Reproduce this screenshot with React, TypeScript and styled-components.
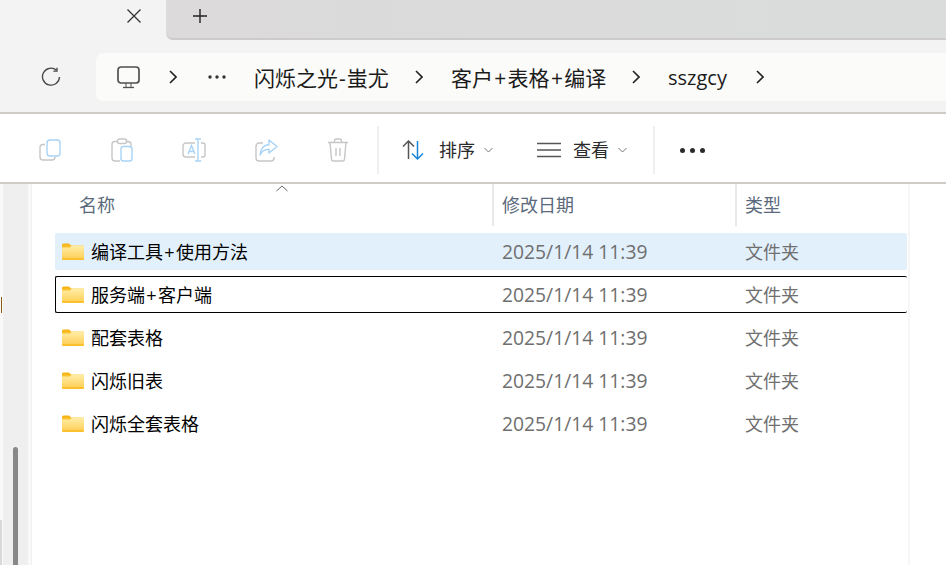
import React from "react";
import styled, { createGlobalStyle } from "styled-components";

const Global = createGlobalStyle`
  html, body { margin: 0; padding: 0; background: #fff; }
  #root { width: 946px; height: 565px; overflow: hidden; }
  * { box-sizing: border-box; }
`;
const CJK = `"Open Sans", "Noto Sans CJK SC", sans-serif`;

const Window = styled.div`
  width: 946px; height: 565px; display: flex; flex-direction: column;
  font-family: ${CJK}; overflow: hidden; background: #fff;
`;
const TabStrip = styled.div`display: flex; height: 40px; background: #f3f3f3; flex: none;`;
const ActiveTab = styled.div`
  width: 166px; padding-left: 125px; padding-top: 7px; flex: none;
`;
const IdleStrip = styled.div`
  flex: 1; background: linear-gradient(90deg, #dcdada, #dadcdc);
  border-bottom: 2px solid #cdcccb; border-bottom-left-radius: 7px;
  padding: 7px 0 0 25px;
`;
const NavBar = styled.div`
  height: 74px; flex: none; background: #f3f3f3; border-bottom: 2px solid #cfcbc6;
  display: flex; padding-top: 13px; align-items: flex-start;
`;
const NavSide = styled.div`
  width: 96px; height: 48px; flex: none; padding-left: 41px; display: flex; align-items: center;
`;
const AddressBar = styled.div`
  flex: 1; height: 48px; background: #fbfbfa; border-radius: 7px 0 0 7px;
  display: flex; align-items: center; padding-left: 21px; color: #1b1b1b;
`;
const Crumb = styled.span<{ $w: number }>`
  font-size: 21px; line-height: 46px; padding-top: 2px; width: ${(p) => p.$w}px; white-space: nowrap; flex: none;
`;
const LatinCrumb = styled(Crumb)`font-size: 20px;`;
const Hyphen = styled.span`margin: 0 1px;`;
const Slot = styled.span<{ $w: number }>`
  width: ${(p) => p.$w}px; flex: none; display: flex; align-items: center;
`;
const CommandBar = styled.div`
  height: 70px; flex: none; background: #fff; border-bottom: 2px solid #cfcbc6;
  display: flex; align-items: center; padding: 4px 0 0 14px;
`;
const ToolButton = styled.div`
  width: 72px; height: 48px; flex: none; display: flex; align-items: center; justify-content: center;
`;
const Divider = styled.div<{ $ml: number }>`
  width: 2px; height: 48px; background: #efefef; flex: none; margin-left: ${(p) => p.$ml}px;
`;
const MenuButton = styled.div<{ $ml: number; $w: number }>`
  display: flex; align-items: center; margin-left: ${(p) => p.$ml}px; width: ${(p) => p.$w}px; flex: none;
`;
const MenuLabel = styled.span<{ $ml: number }>`
  font-size: 18px; color: #2b2b2b; line-height: 24px; margin-left: ${(p) => p.$ml}px; width: 36px; white-space: nowrap;
`;
const Caret = styled.span`margin-left: 9px; display: flex;`;
const MoreDots = styled.div`margin-left: 25px; display: flex; gap: 5px;`;
const Dot = styled.i`width: 5px; height: 5px; border-radius: 50%; background: #2b2b2b; display: block;`;

const Body = styled.div`flex: 1; display: flex; min-height: 0;`;
const LeftGutter = styled.div`
  width: 31px; flex: none; background: #f9f9f9; display: flex; align-items: stretch;
  padding: 0 3px 0 3px;
`;
const ScrollTrack = styled.div`
  flex: 1; background: #efefef; position: relative;
`;
const ScrollThumb = styled.div`
  position: absolute; left: 10px; top: 263px; width: 5px; height: 130px;
  background: #888; border-radius: 3px 3px 0 0;
`;
const EdgeMark = styled.div`
  position: absolute; left: -2px; top: 113px; width: 1px; height: 16px; background: #8a5a10;
`;
const EdgeBlock = styled.div`
  position: absolute; left: -3px; top: 336px; width: 2px; height: 50px; background: #d9d9d9;
`;
const Main = styled.div`
  width: 877px; flex: none; border-left: 1px solid #f1f1f1;
`;
const RightEdge = styled.div`
  width: 2px; flex: none; background: #f6f6f6;
`;
const HeaderRow = styled.div`
  height: 40px; display: grid; grid-template-columns: 460px 243px 1fr; position: relative;
`;
const HeaderCell = styled.div<{ $first?: boolean; $pad: number }>`
  font-size: 18px; color: #5a6a7c; line-height: 42px;
  padding-left: ${(p) => p.$pad}px;
  border-left: ${(p) => (p.$first ? "none" : "2px solid #e9e9e9")};
`;
const SortCaret = styled.svg`position: absolute; left: 243px; top: 0;`;
const List = styled.div`
  margin: 9px 0 0 23px; width: 852px; display: flex; flex-direction: column; gap: 6px;
`;
const Row = styled.div<{ $sel?: boolean; $focus?: boolean }>`
  height: 37px; border-radius: 2px; display: grid; grid-template-columns: 437px 243px 1fr;
  align-items: center;
  background: ${(p) => (p.$sel ? "#e2f0fc" : "transparent")};
  border: 1px solid ${(p) => (p.$focus ? "#000" : "transparent")};
  border-right: ${(p) => (p.$focus ? "none" : undefined)};
`;
const NameCell = styled.div`
  display: flex; align-items: center; gap: 7px; padding-left: 6px;
  font-size: 18px; color: #000; white-space: nowrap;
`;
const NameText = styled.span`padding-bottom: 2px;`;
const DateCell = styled.div`
  font-size: 19.300px; color: #6f6f6f; white-space: nowrap; padding-left: 9px; padding-bottom: 1px;
`;
const TypeCell = styled.div`
  font-size: 18px; color: #6f6f6f; white-space: nowrap; padding-left: 9px; padding-bottom: 2px;
`;
const Plus = styled.span`margin: 0 1.300px;`;

const Plussed = ({ text }: { text: string }) => (
  <>
    {text.split("+").map((part, i) => (
      <React.Fragment key={i}>
        {i > 0 && <Plus>+</Plus>}
        {part}
      </React.Fragment>
    ))}
  </>
);

const S = "#c6c6c6";
const B = "#a9d3f5";
const Folder = () => (
  <svg width="22" height="17" viewBox="0 0 22 17">
    <path d="M0 2a1.500 1.500 0 0 1 1.500-1.500H7l2.500 2.500H0z" fill="#f5b415" />
    <rect x="0" y="2.500" width="22" height="14.500" rx="1" fill="#fbc02d" />
    <path d="M0 4.500 L8 4.500 L10 2.500 L21 2.500 a1 1 0 0 1 1 1 V15 H0z" fill="url(#fg)" />
    <defs>
      <linearGradient id="fg" x1="0" y1="0" x2="0" y2="1">
        <stop offset="0" stopColor="#ffeeaa" />
        <stop offset="1" stopColor="#ffd15c" />
      </linearGradient>
    </defs>
  </svg>
);
const Chevron = () => (
  <svg width="8" height="14" viewBox="0 0 8 14" fill="none" stroke="#222" strokeWidth="1.600">
    <path d="M1 1l6 6-6 6" />
  </svg>
);
const Down = () => (
  <svg width="9" height="6" viewBox="0 0 9 6" fill="none" stroke="#777" strokeWidth="1">
    <path d="M.5 1l4 4 4-4" />
  </svg>
);

const rows = ["编译工具+使用方法", "服务端+客户端", "配套表格", "闪烁旧表", "闪烁全套表格"];

export default function App() {
  return (
    <Window>
      <Global />
      <TabStrip>
        <ActiveTab>
          <svg width="18" height="18" viewBox="0 0 18 18" fill="none" stroke="#333" strokeWidth="1.300">
            <path d="M2.500 2.500l13 13M15.500 2.500l-13 13" />
          </svg>
        </ActiveTab>
        <IdleStrip>
          <svg width="18" height="18" viewBox="0 0 18 18" fill="none" stroke="#222" strokeWidth="1.400">
            <path d="M9 2v14M2 9h14" />
          </svg>
        </IdleStrip>
      </TabStrip>
      <NavBar>
        <NavSide>
          <svg width="20" height="20" viewBox="0 0 20 20" fill="none" stroke="#444" strokeWidth="1.300">
            <path d="M15.500 3.200A8.500 8.500 0 1 0 18.500 10" />
            <path d="M16 .8v3.400h-3.600" />
          </svg>
        </NavSide>
        <AddressBar>
          <Slot $w={52}>
            <svg width="23" height="23" viewBox="0 0 23 23" fill="none" stroke="#505050" strokeWidth="1.700">
              <rect x="1" y="1" width="21" height="16" rx="3" />
              <path d="M6 21.500h11" strokeWidth="1.300" />
              <path d="M9 17v4M14 17v4" strokeWidth="1" />
            </svg>
          </Slot>
          <Slot $w={39}>
            <Chevron />
          </Slot>
          <Slot $w={46}>
            <svg width="18" height="4" viewBox="0 0 18 4" fill="#333">
              <circle cx="2" cy="2" r="1.700" /><circle cx="9" cy="2" r="1.700" /><circle cx="16" cy="2" r="1.700" />
            </svg>
          </Slot>
          <Crumb $w={161}>闪烁之光<Hyphen>-</Hyphen>蚩尤</Crumb>
          <Slot $w={36}><Chevron /></Slot>
          <Crumb $w={181}><Plussed text="客户+表格+编译" /></Crumb>
          <Slot $w={36}><Chevron /></Slot>
          <LatinCrumb $w={88}>sszgcy</LatinCrumb>
          <Slot $w={20}><Chevron /></Slot>
        </AddressBar>
      </NavBar>
      <CommandBar>
        <ToolButton>
          <svg width="22" height="22" viewBox="0 0 22 22" fill="none" strokeWidth="1.400">
            <path d="M6 5.500H4a3 3 0 0 0-3 3V18a3 3 0 0 0 3 3h9a3 3 0 0 0 3-3v-.5" stroke={S} />
            <rect x="8" y="1" width="13" height="16" rx="3" stroke={B} />
          </svg>
        </ToolButton>
        <ToolButton>
          <svg width="22" height="24" viewBox="0 0 22 24" fill="none" strokeWidth="1.400">
            <path d="M7 3.500H4a3 3 0 0 0-3 3V20a3 3 0 0 0 3 3h5M16 3.500h1a3 3 0 0 1 3 3V8" stroke={S} />
            <rect x="6.500" y="1" width="9" height="4.500" rx="2" stroke={S} />
            <rect x="10" y="8.500" width="11" height="14.500" rx="2.500" stroke={B} />
          </svg>
        </ToolButton>
        <ToolButton>
          <svg width="24" height="24" viewBox="0 0 24 24" fill="none" strokeWidth="1.400">
            <path d="M13 5H4a3 3 0 0 0-3 3v8a3 3 0 0 0 3 3h9M19 5h2a2 2 0 0 1 2 2v10a2 2 0 0 1-2 2h-2" stroke={S} />
            <path d="M6 16l3.500-8.500L13 16M7.200 13.500h4.600" stroke={B} />
            <path d="M16 1v22M13 1h6M13 23h6" stroke={B} />
          </svg>
        </ToolButton>
        <ToolButton>
          <svg width="23" height="23" viewBox="0 0 23 23" fill="none" strokeWidth="1.400">
            <path d="M8 4H4a3 3 0 0 0-3 3v12a3 3 0 0 0 3 3h12a3 3 0 0 0 3-3v-1" stroke={S} />
            <path d="M14 1l8 6.500-8 6.500v-3.800C9.500 10.200 7 12 5 16c.5-6 4-10 9-10.500z" stroke={B} strokeLinejoin="round" />
          </svg>
        </ToolButton>
        <ToolButton>
          <svg width="22" height="24" viewBox="0 0 22 24" fill="none" stroke={S} strokeWidth="1.400">
            <path d="M1 4.500h20M7.500 4.500V3a2 2 0 0 1 2-2h3a2 2 0 0 1 2 2v1.500" />
            <path d="M3 4.500l1.500 16.500a2 2 0 0 0 2 2h9a2 2 0 0 0 2-2L19 4.500" />
            <path d="M9 10v8M13 10v8" />
          </svg>
        </ToolButton>
        <Divider $ml={3} />
        <MenuButton $ml={23} $w={135}>
          <svg width="22" height="20" viewBox="0 0 22 20" fill="none" strokeWidth="1.500">
            <path d="M6.500 19V1M1 6.500l5.500-5.500 5.500 5.500" stroke="#555" />
            <path d="M15.500 1v18M10 13.500l5.500 5.500 5.500-5.500" stroke="#1a86d9" />
          </svg>
          <MenuLabel $ml={15}>排序</MenuLabel>
          <Caret><Down /></Caret>
        </MenuButton>
        <MenuButton $ml={0} $w={115}>
          <svg width="24" height="16" viewBox="0 0 24 16" fill="none" stroke="#555" strokeWidth="1.500">
            <path d="M0 1.500h24M0 8h24M0 14.500h24" />
          </svg>
          <MenuLabel $ml={12}>查看</MenuLabel>
          <Caret><Down /></Caret>
        </MenuButton>
        <Divider $ml={1} />
        <MoreDots>
          <Dot /><Dot /><Dot />
        </MoreDots>
      </CommandBar>
      <Body>
        <LeftGutter>
          <ScrollTrack>
            <EdgeMark />
            <EdgeBlock />
            <ScrollThumb />
          </ScrollTrack>
        </LeftGutter>
        <Main>
          <HeaderRow>
            <HeaderCell $first $pad={47}>名称</HeaderCell>
            <HeaderCell $pad={8}>修改日期</HeaderCell>
            <HeaderCell $pad={8}>类型</HeaderCell>
            <SortCaret width="14" height="8" viewBox="0 0 14 8" fill="none" stroke="#666" strokeWidth="1">
              <path d="M1.500 7l5.500-5 5.500 5" />
            </SortCaret>
          </HeaderRow>
          <List>
            {rows.map((n, i) => (
              <Row key={n} $sel={i === 0} $focus={i === 1}>
                <NameCell>
                  <Folder />
                  <NameText><Plussed text={n} /></NameText>
                </NameCell>
                <DateCell>2025/1/14 11:39</DateCell>
                <TypeCell>文件夹</TypeCell>
              </Row>
            ))}
          </List>
        </Main>
        <RightEdge />
      </Body>
    </Window>
  );
}
